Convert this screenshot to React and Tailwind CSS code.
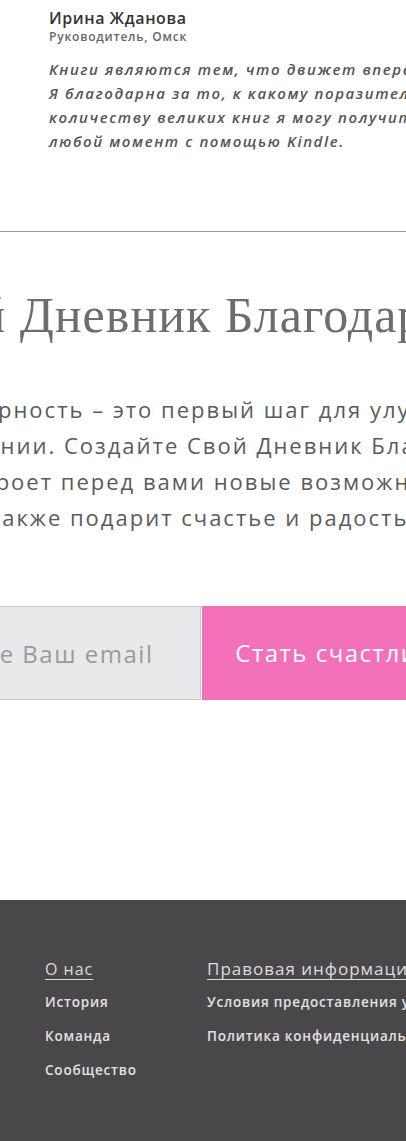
export default function App() {
  const sans = { fontFamily: '"Open Sans", "Noto Sans", sans-serif' }

  return (
    <div className="w-full overflow-hidden bg-white" style={sans}>
      {/* отзыв */}
      <section className="pl-[49px] pt-[8px] pb-[78px]">
        <h4 className="whitespace-nowrap text-[16px] leading-[21px] font-semibold tracking-[0.6px] text-[#333]">
          Ирина Жданова
        </h4>
        <p className="whitespace-nowrap text-[12px] leading-[15px] font-semibold tracking-[0.8px] text-[#666]">
          Руководитель, Омск
        </p>
        <p className="mt-[13px] whitespace-nowrap text-[15px] leading-[24px] italic font-semibold tracking-[1.6px] text-[#555]">
          Книги являются тем, что движет вперед мою жизнь.
          <br />
          Я благодарна за то, к какому поразительному
          <br />
          количеству великих книг я могу получить доступ в
          <br />
          любой момент с помощью Kindle.
        </p>
      </section>

      <hr className="border-0 border-t border-[#999]" />

      {/* дневник */}
      <section className="pt-[51px] flex flex-col items-center">
        <h2 className="whitespace-nowrap pl-[40px] text-[50px] leading-[64px] tracking-[1px] text-[#6d6d6f] font-['Liberation_Serif',serif]">
          Свой Дневник Благодарности
        </h2>
        <p className="mt-[44px] whitespace-nowrap text-center text-[22px] leading-[36px] tracking-[2px] text-[#5a5a5c]">
          Благодарность – это первый шаг для улучшения
          <br />
          жизни и гармонии. Создайте Свой Дневник Благодарности, и
          <br />
          он откроет перед вами новые возможности и
          <br />
          также подарит счастье и радость.
        </p>

        <form className="mt-[71px] flex">
          <input
            placeholder="Введите Ваш email"
            className="w-[300px] h-[94px] shrink-0 bg-[#e9e9eb] border border-[#c9c9c9] pr-[40px] text-center text-[24px] tracking-[1.5px] placeholder:text-[#9a9a9c] outline-none"
          />
          <button
            type="button"
            className="ml-px w-[304px] h-[94px] shrink-0 bg-[#f371b8] text-white text-[24px] tracking-[1.5px]"
          >
            Стать счастливым
          </button>
        </form>
      </section>

      {/* подвал */}
      <footer className="mt-[200px] h-[241px] bg-[#49474a] pl-[45px] pt-[58px] flex">
        <div className="w-[162px] shrink-0">
          <a className="block text-[16px] leading-[22px] tracking-[1px] text-[#ddd] underline underline-offset-[4px]">
            О нас
          </a>
          <ul className="mt-[12px] flex flex-col gap-[14px] text-[13.5px] leading-[20px] font-semibold tracking-[0.8px] text-[#e2e2e2]">
            <li>История</li>
            <li>Команда</li>
            <li>Сообщество</li>
          </ul>
        </div>
        <div className="shrink-0 whitespace-nowrap">
          <a className="block text-[17px] leading-[22px] tracking-[1px] text-[#ddd] underline underline-offset-[4px]">
            Правовая информация
          </a>
          <ul className="mt-[12px] flex flex-col gap-[14px] text-[13.5px] leading-[20px] font-semibold tracking-[0.8px] text-[#e2e2e2]">
            <li>Условия предоставления услуг</li>
            <li>Политика конфиденциальности</li>
          </ul>
        </div>
      </footer>
    </div>
  )
}
